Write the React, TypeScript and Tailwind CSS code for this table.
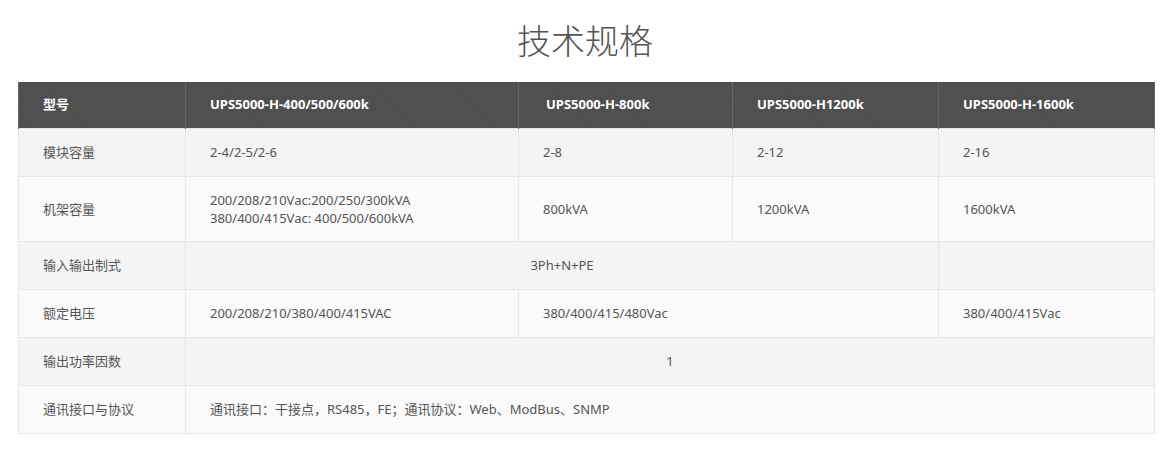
import React from 'react'

const font = { fontFamily: '"Noto Sans", "Noto Sans CJK SC", sans-serif' }

const headers = ['型号', 'UPS5000-H-400/500/600k', 'UPS5000-H-800k', 'UPS5000-H1200k', 'UPS5000-H-1600k']

const td = 'border border-[#e6e6e6] px-[24px] py-[14px] text-[13px] leading-[18px] text-[#555] align-middle'

const SpecTable = () => {
  return (
    <table className="w-[1136px] ml-[18px] border-collapse table-fixed">
      <colgroup>
        <col className="w-[167px]" />
        <col className="w-[333px]" />
        <col className="w-[214px]" />
        <col className="w-[206px]" />
        <col className="w-[216px]" />
      </colgroup>
      <thead>
        <tr className="h-[46px] bg-[repeating-linear-gradient(45deg,#4e4e4e_0px,#4e4e4e_2px,#515151_2px,#515151_4px)]">
          {headers.map((h, i) => (
            <th
              key={h}
              className={
                'border-x border-[#666] text-left text-[13px] font-bold text-white px-[24px] ' +
                (i === 2 ? 'pl-[27px]' : '')
              }
            >
              {h}
            </th>
          ))}
        </tr>
      </thead>
      <tbody>
        <tr className="bg-[#f4f4f4] h-[48px]">
          <td className={td}>模块容量</td>
          <td className={td}>2-4/2-5/2-6</td>
          <td className={td}>2-8</td>
          <td className={td}>2-12</td>
          <td className={td}>2-16</td>
        </tr>
        <tr className="bg-[#fafafa] h-[65px]">
          <td className={td}>机架容量</td>
          <td className={td}>
            <div>200/208/210Vac:200/250/300kVA</div>
            <div>380/400/415Vac: 400/500/600kVA</div>
          </td>
          <td className={td}>800kVA</td>
          <td className={td}>1200kVA</td>
          <td className={td}>1600kVA</td>
        </tr>
        <tr className="bg-[#f4f4f4] h-[48px]">
          <td className={td}>输入输出制式</td>
          <td className={td + ' text-center'} colSpan={3}>3Ph+N+PE</td>
          <td className={td}></td>
        </tr>
        <tr className="bg-[#fafafa] h-[48px]">
          <td className={td}>额定电压</td>
          <td className={td}>200/208/210/380/400/415VAC</td>
          <td className={td} colSpan={2}>380/400/415/480Vac</td>
          <td className={td}>380/400/415Vac</td>
        </tr>
        <tr className="bg-[#f4f4f4] h-[48px]">
          <td className={td}>输出功率因数</td>
          <td className={td + ' text-center'} colSpan={4}>1</td>
        </tr>
        <tr className="bg-[#fafafa] h-[48px]">
          <td className={td}>通讯接口与协议</td>
          <td className={td} colSpan={4}>通讯接口：干接点，RS485，FE；通讯协议：Web、ModBus、SNMP</td>
        </tr>
      </tbody>
    </table>
  )
}

export default function App() {
  return (
    <div className="w-[1170px] h-[452px] bg-white" style={font}>
      <h2 className="h-[82px] pt-[17px] text-center text-[34px] leading-[48px] font-light text-[#555]">
        技术规格
      </h2>
      <SpecTable />
    </div>
  )
}
